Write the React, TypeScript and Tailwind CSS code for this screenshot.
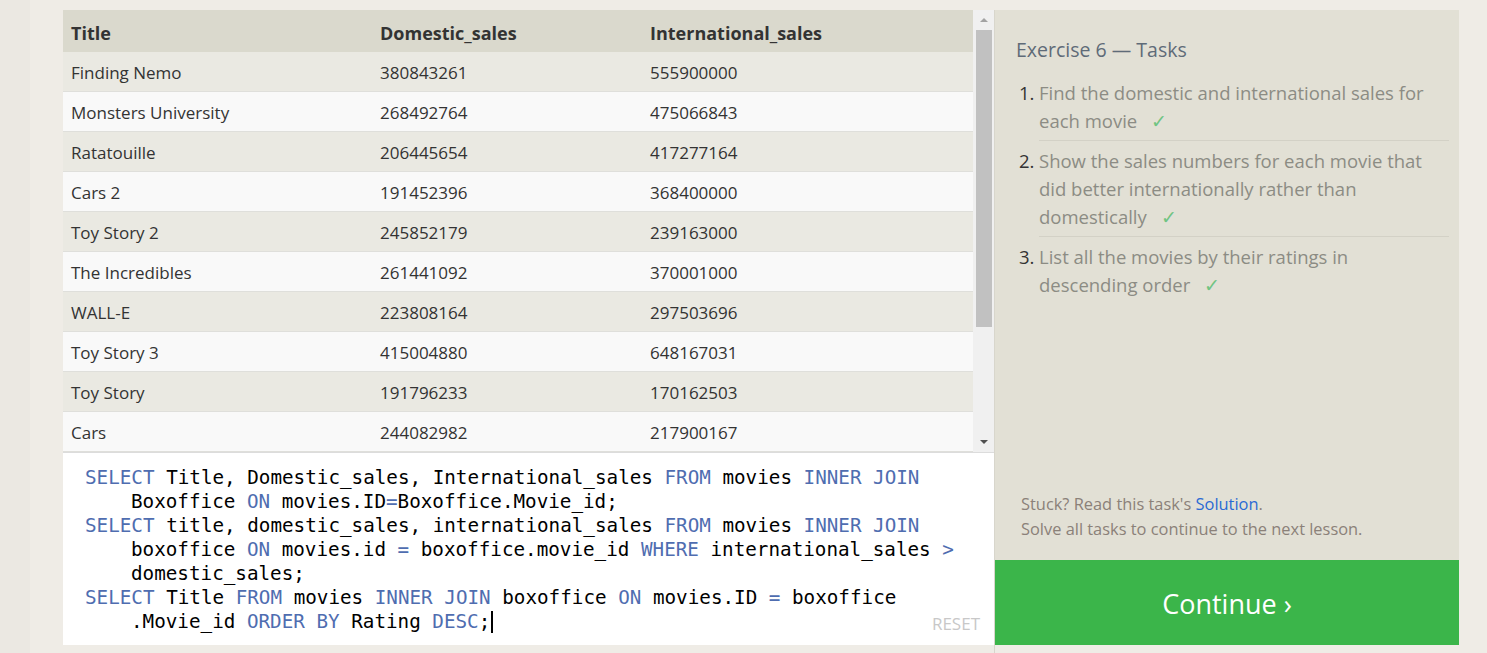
const rows = [
  ["Finding Nemo", "380843261", "555900000"],
  ["Monsters University", "268492764", "475066843"],
  ["Ratatouille", "206445654", "417277164"],
  ["Cars 2", "191452396", "368400000"],
  ["Toy Story 2", "245852179", "239163000"],
  ["The Incredibles", "261441092", "370001000"],
  ["WALL-E", "223808164", "297503696"],
  ["Toy Story 3", "415004880", "648167031"],
  ["Toy Story", "191796233", "170162503"],
  ["Cars", "244082982", "217900167"],
];

const K = ({ children }: { children: React.ReactNode }) => (
  <span className="text-[#4f6db0]">{children}</span>
);

const tasks = [
  ["Find the domestic and international sales for", "each movie"],
  ["Show the sales numbers for each movie that", "did better internationally rather than", "domestically"],
  ["List all the movies by their ratings in", "descending order"],
];

export default function App() {
  const sans = { fontFamily: '"Open Sans", "Noto Sans", sans-serif' };
  return (
    <div className="flex h-[653px] w-[1487px] overflow-hidden bg-[#efece6]" style={sans}>
      <div className="w-[30px] bg-[#ebe8e2]" />
      <div className="flex pt-[10px] pl-[33px]">
        {/* left: table + editor */}
        <div className="flex w-[931px] flex-col">
          <div className="flex h-[443px] border-b border-[#dcdcdc]">
            <div className="flex-1">
              <div className="flex h-[42px] items-center bg-[#dad9cd] pt-[4px] text-[18px] font-bold text-[#333]">
                <div className="w-[309px] pl-[8px]">Title</div>
                <div className="w-[270px] pl-[8px]">Domestic_sales</div>
                <div className="pl-[8px]">International_sales</div>
              </div>
              {rows.map((r, i) => (
                <div
                  key={r[0]}
                  className={`flex h-[40px] items-center border-b border-[#dfdfdb] pt-[2px] text-[17px] text-[#333] ${
                    i % 2 === 0 ? "bg-[#eae9e2]" : "bg-[#f9f9f9]"
                  }`}
                >
                  <div className="w-[309px] pl-[8px]">{r[0]}</div>
                  <div className="w-[270px] pl-[8px]">{r[1]}</div>
                  <div className="pl-[8px]">{r[2]}</div>
                </div>
              ))}
            </div>
            {/* scrollbar */}
            <div className="flex w-[21px] flex-col items-center bg-[#f0f0f0]">
              <div className="flex h-[20px] items-center justify-center">
                <div className="h-0 w-0 border-x-[4px] border-b-[4px] border-x-transparent border-b-[#a3a3a3]" />
              </div>
              <div className="h-[297px] w-[16px] bg-[#c1c1c1]" />
              <div className="flex-1" />
              <div className="flex h-[20px] items-center justify-center">
                <div className="h-0 w-0 border-x-[4px] border-t-[4px] border-x-transparent border-t-[#505050]" />
              </div>
            </div>
          </div>
          <div
            className="flex h-[192px] flex-col bg-white pl-[22px] pr-[14px] pt-[13px] text-[19.25px] leading-[24px] text-black"
            style={{ fontFamily: '"DejaVu Sans Mono", "Liberation Mono", monospace' }}
          >
            <div><K>SELECT</K> Title, Domestic_sales, International_sales <K>FROM</K> movies <K>INNER JOIN</K></div>
            <div className="pl-[46px]">Boxoffice <K>ON</K> movies.ID<K>=</K>Boxoffice.Movie_id;</div>
            <div><K>SELECT</K> title, domestic_sales, international_sales <K>FROM</K> movies <K>INNER JOIN</K></div>
            <div className="pl-[46px]">boxoffice <K>ON</K> movies.id <K>=</K> boxoffice.movie_id <K>WHERE</K> international_sales <K>&gt;</K></div>
            <div className="pl-[46px]">domestic_sales;</div>
            <div><K>SELECT</K> Title <K>FROM</K> movies <K>INNER JOIN</K> boxoffice <K>ON</K> movies.ID <K>=</K> boxoffice</div>
            <div className="flex items-end justify-between pl-[46px]">
              <span className="flex items-center whitespace-pre">
                .Movie_id <K>ORDER BY</K> Rating <K>DESC</K>;
                <span className="ml-[1px] inline-block h-[22px] w-[2px] bg-black" />
              </span>
              <span className="text-[17px] leading-[20px] text-[#c8c8c8]" style={sans}>RESET</span>
            </div>
          </div>
        </div>
        {/* right: tasks */}
        <div className="flex w-[465px] flex-col border-l border-[#d8d6cc]">
          <div className="flex h-[550px] flex-col bg-[#e2e0d5] pl-[21px] pr-[10px] pt-[25px]">
            <h2 className="text-[19.5px] leading-[30px] text-[#5f6b78]">Exercise 6 — Tasks</h2>
            <ol className="mt-[14px]">
              {tasks.map((t, i) => (
                <li key={i} className={`flex text-[18.5px] leading-[28px] ${i === 0 ? "" : "pt-[6px]"}`}>
                  <span className="w-[23px] pl-[3px] text-[#333]">{i + 1}.</span>
                  <div
                    className={`flex-1 pb-[5px] text-[#8c8c84] ${
                      i < tasks.length - 1 ? "border-b border-[#d3d1c6]" : ""
                    }`}
                  >
                    {t.map((line, j) => (
                      <div key={j}>
                        {line}
                        {j === t.length - 1 && <span className="ml-[14px] text-[#70c482]">✓</span>}
                      </div>
                    ))}
                  </div>
                </li>
              ))}
            </ol>
            <div className="flex-1" />
            <div className="pb-[19px] pl-[5px] text-[16.4px] leading-[25px] text-[#8b8179]">
              <div>
                Stuck? Read this task's <span className="text-[#2a6ad4]">Solution</span>.
              </div>
              <div>Solve all tasks to continue to the next lesson.</div>
            </div>
          </div>
          <button className="flex h-[85px] items-center justify-center bg-[#3bb54a] pt-[4px] text-[27px] text-white">
            Continue ›
          </button>
        </div>
      </div>
    </div>
  );
}
